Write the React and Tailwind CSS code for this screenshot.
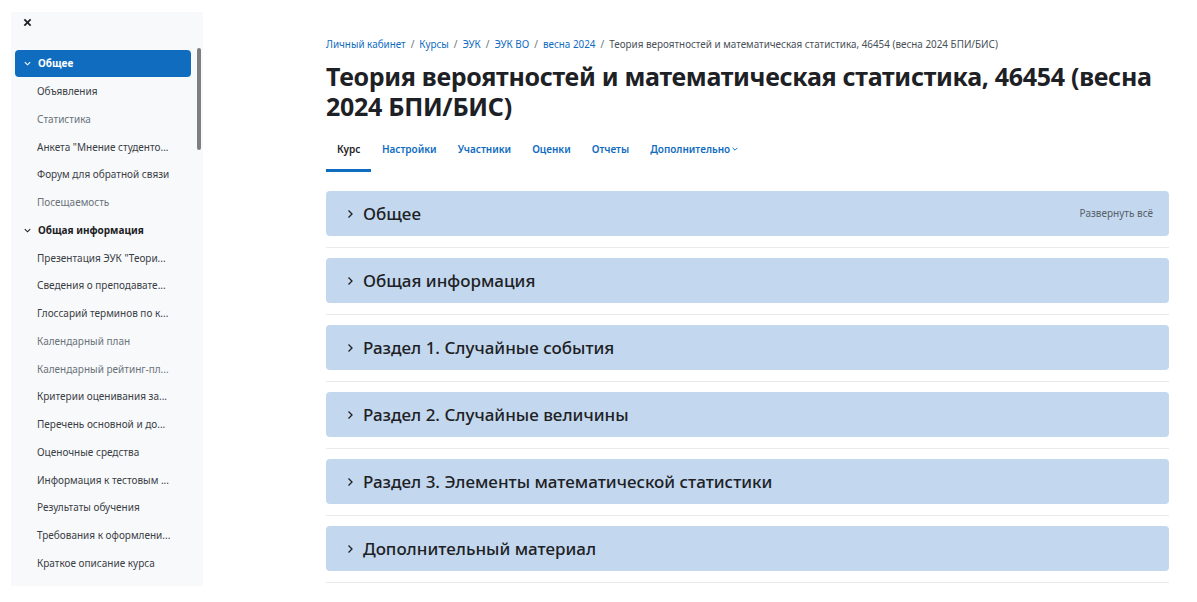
import React from "react";

const items = [
  { t: "Общее", section: true, active: true },
  { t: "Объявления" },
  { t: "Статистика", dim: true },
  { t: "Анкета \"Мнение студенто..." },
  { t: "Форум для обратной связи" },
  { t: "Посещаемость", dim: true },
  { t: "Общая информация", section: true },
  { t: "Презентация ЭУК \"Теори..." },
  { t: "Сведения о преподавате..." },
  { t: "Глоссарий терминов по к..." },
  { t: "Календарный план", dim: true },
  { t: "Календарный рейтинг-пл...", dim: true },
  { t: "Критерии оценивания за..." },
  { t: "Перечень основной и до..." },
  { t: "Оценочные средства" },
  { t: "Информация к тестовым ..." },
  { t: "Результаты обучения" },
  { t: "Требования к оформлени..." },
  { t: "Краткое описание курса" },
];

const sections = [
  "Общее",
  "Общая информация",
  "Раздел 1. Случайные события",
  "Раздел 2. Случайные величины",
  "Раздел 3. Элементы математической статистики",
  "Дополнительный материал",
];

function ChevDown({ className }) {
  return (
    <svg viewBox="0 0 10 10" className={className} fill="none" stroke="currentColor" strokeWidth="1.2">
      <polyline points="2,3.5 5,6.5 8,3.5" />
    </svg>
  );
}

function ChevRight({ className }) {
  return (
    <svg viewBox="0 0 10 10" className={className} fill="none" stroke="currentColor" strokeWidth="1.3">
      <polyline points="3.5,1.5 7,5 3.5,8.5" />
    </svg>
  );
}

export default function App() {
  return (
    <div
      className="w-[1197px] h-[602px] bg-white flex overflow-hidden text-[#1d2125]"
      style={{ fontFamily: "'Noto Sans', 'Open Sans', sans-serif" }}
    >
      {/* Sidebar */}
      <aside className="ml-[11px] mt-[12px] w-[192px] h-[574px] bg-[#f8f9fa] relative shrink-0">
        <div className="h-[38px] pl-[12px] pt-[4px]">
          <svg viewBox="0 0 10 10" className="w-[9px] h-[9px] mt-[2px]" fill="none" stroke="#1d2125" strokeWidth="2">
            <line x1="1.5" y1="1.5" x2="8.5" y2="8.5" />
            <line x1="8.5" y1="1.5" x2="1.5" y2="8.5" />
          </svg>
        </div>
        <div className="absolute left-[186px] top-[36px] w-[4px] h-[102px] rounded-full bg-[#7f7f7f]" />
        <ul className="flex flex-col">
          {items.map((it, i) =>
            it.active ? (
              <li
                key={i}
                className="ml-[4px] w-[176px] h-[27px] mb-[0.75px] rounded-[4px] bg-[#0f6cbf] text-white flex items-center pl-[8px] text-[10px] font-bold"
              >
                <ChevDown className="w-[9px] h-[9px] mr-[6px]" />
                {it.t}
              </li>
            ) : it.section ? (
              <li key={i} className="h-[27.75px] flex items-center pl-[12px] text-[10px] font-bold text-[#1d2125]">
                <ChevDown className="w-[9px] h-[9px] mr-[6px]" />
                {it.t}
              </li>
            ) : (
              <li
                key={i}
                className={
                  "h-[27.75px] flex items-center pl-[26px] text-[10px] whitespace-nowrap " +
                  (it.dim ? "text-[#6a737b]" : "text-[#3a4046]")
                }
              >
                {it.t}
              </li>
            )
          )}
        </ul>
      </aside>

      {/* Main */}
      <main className="ml-[123px] w-[843px] shrink-0">
        <nav className="mt-[37px] h-[14px] flex items-center text-[9.9px] whitespace-nowrap">
          <span className="text-[#0f6cbf]">Личный кабинет</span>
          <span className="text-[#6a737b] mx-[5px]">/</span>
          <span className="text-[#0f6cbf]">Курсы</span>
          <span className="text-[#6a737b] mx-[5px]">/</span>
          <span className="text-[#0f6cbf]">ЭУК</span>
          <span className="text-[#6a737b] mx-[5px]">/</span>
          <span className="text-[#0f6cbf]">ЭУК ВО</span>
          <span className="text-[#6a737b] mx-[5px]">/</span>
          <span className="text-[#0f6cbf]">весна 2024</span>
          <span className="text-[#6a737b] mx-[5px]">/</span>
          <span className="text-[#495057]">Теория вероятностей и математическая статистика, 46454 (весна 2024 БПИ/БИС)</span>
        </nav>
        <h1 className="mt-[10px] text-[25px] leading-[30px] tracking-[-0.3px] font-bold text-[#1d2125]">
          Теория вероятностей и математическая статистика, 46454 (весна 2024 БПИ/БИС)
        </h1>
        <div className="mt-[15px] flex text-[10px] font-semibold h-[36px]">
          <div className="px-[11px] flex flex-col items-center border-b-[3px] border-[#0f6cbf] text-[#1d2125]">
            <span className="mt-[6px]">Курс</span>
          </div>
          <div className="px-[10.5px] text-[#0f6cbf]"><span className="block mt-[6px]">Настройки</span></div>
          <div className="px-[10.5px] text-[#0f6cbf]"><span className="block mt-[6px]">Участники</span></div>
          <div className="px-[10.5px] text-[#0f6cbf]"><span className="block mt-[6px]">Оценки</span></div>
          <div className="px-[10.5px] text-[#0f6cbf]"><span className="block mt-[6px]">Отчеты</span></div>
          <div className="px-[10.5px] text-[#0f6cbf] flex items-start">
            <span className="block mt-[6px]">Дополнительно</span>
            <ChevDown className="w-[8px] h-[8px] mt-[9px] ml-[1px]" />
          </div>
        </div>

        <div className="mt-[19px] flex flex-col">
          {sections.map((s, i) => (
            <div key={i} className="pb-[11px] mb-[10px] border-b border-[#eaeaea]">
              <div className="h-[45px] rounded-[4px] bg-[#c3d8ee] flex items-center pl-[19px] pr-[16px]">
                <ChevRight className="w-[10px] h-[10px] mr-[8px] text-[#1d2125]" />
                <span className="text-[17px] font-medium text-[#1d2125]">{s}</span>
                {i === 0 && (
                  <span className="ml-auto text-[10px] text-[#56606a]">Развернуть всё</span>
                )}
              </div>
            </div>
          ))}
        </div>
      </main>
    </div>
  );
}
